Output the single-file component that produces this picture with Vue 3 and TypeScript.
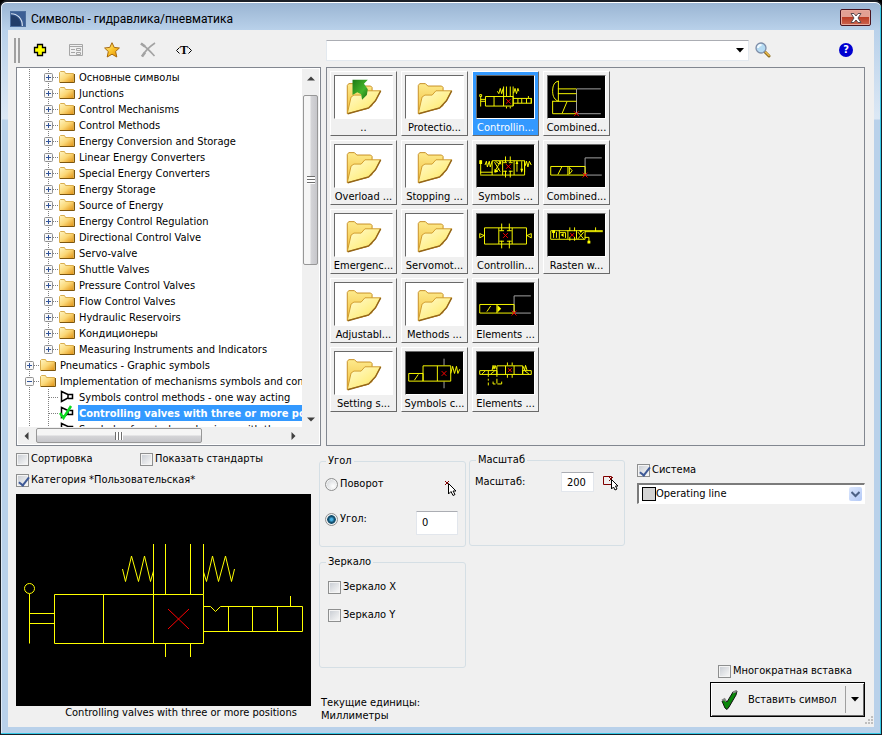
<script setup lang="ts">
import { ref } from 'vue'

type Row = { level: 0 | 1; text: string; kind: 'folder' | 'symbol' | 'checked'; open?: boolean; last?: boolean }
type Tile = { label: string; art: string }

const folders = [
  'Основные символы', 'Junctions', 'Control Mechanisms', 'Control Methods',
  'Energy Conversion and Storage', 'Linear Energy Converters', 'Special Energy Converters',
  'Energy Storage', 'Source of Energy', 'Energy Control Regulation', 'Directional Control Valve',
  'Servo-valve', 'Shuttle Valves', 'Pressure Control Valves', 'Flow Control Valves',
  'Hydraulic Reservoirs', 'Кондиционеры', 'Measuring Instruments and Indicators',
]

const rows: Row[] = [
  ...folders.map((text, i): Row => ({ level: 1, text, kind: 'folder', last: i === folders.length - 1 })),
  { level: 0, text: 'Pneumatics - Graphic symbols', kind: 'folder' },
  { level: 0, text: 'Implementation of mechanisms symbols and controls', kind: 'folder', open: true },
  { level: 1, text: 'Symbols control methods - one way acting', kind: 'symbol' },
  { level: 1, text: 'Controlling valves with three or more positions', kind: 'checked' },
  { level: 1, text: 'Symbols of control mechanisms with three positions', kind: 'symbol' },
]
const selectedRow = ref('Controlling valves with three or more positions')

const tiles: Tile[] = [
  { label: '..', art: 'up' },
  { label: 'Overload ...', art: 'folder' },
  { label: 'Emergenc...', art: 'folder' },
  { label: 'Adjustabl...', art: 'folder' },
  { label: 'Setting s...', art: 'folder' },
  { label: 'Protectio...', art: 'folder' },
  { label: 'Stopping ...', art: 'folder' },
  { label: 'Servomot...', art: 'folder' },
  { label: 'Methods ...', art: 'folder' },
  { label: 'Symbols c...', art: 'spring' },
  { label: 'Controllin...', art: 'control' },
  { label: 'Symbols ...', art: 'symbols' },
  { label: 'Controllin...', art: 'pilot' },
  { label: 'Elements ...', art: 'solenoid' },
  { label: 'Elements ...', art: 'elements' },
  { label: 'Combined...', art: 'manual' },
  { label: 'Combined...', art: 'combined' },
  { label: 'Rasten w...', art: 'rasten' },
]
const selectedTile = ref(10)

// Line work of each symbol: yellow body, gray leads, red insertion mark
const drawings: Record<string, { y: string; g?: string; r: string; f?: string }> = {
  spring: {
    y: 'M2.5 22.5H17.5V30.5H2.5ZM8.5 29.5L12.5 23.5M17.5 14.5H46.5V30.5H17.5ZM32.5 14.5V30.5M46.5 22.5L48.5 15L50.5 22.5L52.5 15L54 22.5L56 18',
    g: 'M39.5 7V14M39.5 31V38', r: 'M37 20L42 25M42 20L37 25',
  },
  control: {
    y: 'M8.5 21.5H37.5V31.5H8.5ZM17.5 21.5V31.5M27.5 11V31.5M30.5 11V21M34.5 11V21M37.5 11V31.5M37.5 23.5H56.5V28.5H37.5M56.5 23V29M42.5 23.5V28.5M46.5 23.5V28.5M51.5 23.5V28.5M53.5 21V23M3.5 22V32M3.5 24.5H8.5M3.5 26.5H8.5M2.5 19.5H4.5V21.5H2.5ZM30.5 32V34M34.5 32V34M21 16L22.5 18.5L24 13L25.5 18.5L27 13M38 18L39.5 13L41 18.5L42.5 13L43.5 16',
    r: 'M30 24L35 29M35 24L30 29',
  },
  symbols: {
    y: 'M3.5 16V31M3 28.5H16M3 31.5H49.5M8 21L9.5 17L10.5 23L12.5 17L13.5 23L15.5 17M15.5 16.5H49.5V28.5M15.5 16.5V31.5M26.5 16.5V31.5M38.5 16.5V31.5M49.5 16.5V31.5M18 18L24 28M24 18L18 28M19 17L23 20M19 28L23 25M29.5 12V18M34.5 12V18M27 18.5H31M33 18.5H37M29.5 27V34M34.5 27V34M27 27.5H31M33 27.5H37M41.5 17V28M46.5 17V28M50 22L51.5 17L53 23L54.5 17L56.5 21',
    f: 'M2 16H5V20H2ZM40 20L41.5 16.5L43 20ZM45 25H48L46.5 29ZM22 17H25V21ZM18 29V25L22 28Z', r: 'M30 20L35 25M35 20L30 25',
  },
  pilot: {
    y: 'M7.5 14.5H51.5V31.5H7.5ZM22.5 14.5V31.5M36.5 14.5V31.5M25.5 10V17.5M33.5 10V17.5M23 17.5H28M31 17.5H36M25.5 28V36M33.5 28V36M23 28.5H28M31 28.5H36M2.5 20.5L7 22.5L2.5 25ZM56.5 20.5L52 22.5L56.5 25Z',
    r: 'M27 20L32 25M32 20L27 25',
  },
  solenoid: {
    y: 'M2.5 22.5H38.5V31.5H2.5ZM20.5 22.5V31.5M10 30L14 24', f: 'M21 23L25 27L21 31Z',
    g: 'M56 13.5H38.5V31.5H56', r: 'M36 29L41 34M41 29L36 34',
  },
  elements: {
    y: 'M20.5 14.5H47.5V23.5H20.5ZM29.5 14.5V23.5M38.5 14.5V23.5M2.5 19.5H20.5V23.5H2.5ZM11.5 19.5V23.5M5 23L8 20M14 23L18 20M47.5 19.5H56.5V23.5H47.5ZM50 20L54 23M15.5 19L16.5 14L17.5 18L18.5 14L20 18M48 15L49.5 19L50.5 14L52 19M31.5 11V14M36.5 11V14M31.5 24V27M36.5 24V27M11.5 24V26M11.5 28V30M11.5 32V35M20.5 24V26M20.5 28V33M16.5 31V33.5H19M21 33.5H25.5V31',
    r: 'M32 17L36 21M36 17L32 21',
  },
  manual: {
    y: 'M10.5 5V26.5M10.5 5.5C7 6 4.5 9 4.5 16C4.5 22 7 25 10.5 26.5M10 13.5H29.5M10 18.5H29.5M4.5 26.5H29.5M4.5 26V39.5H29.5M14.5 39L19.5 27',
    g: 'M29.5 13.5V39.5M30 13.5H55M30 39.5H55', r: 'M27 37L32 42M32 37L27 42',
  },
  combined: {
    y: 'M2.5 22.5H38.5V31.5H2.5ZM20.5 22.5V31.5M10 31L14 23M22 23.5L25 27L22 30.5Z',
    g: 'M56 13.5H38.5V31.5H56', r: 'M36 29L41 34M41 29L36 34',
  },
  rasten: {
    y: 'M2.5 17.5H38.5V26.5H2.5ZM11.5 17V26M20.5 17V26M29.5 17V26M5.5 19V25M8.5 19V25M12 19.5H18V25M22.5 14V18M27.5 14V18M22.5 24V28M27.5 24V28M31 19L37 26M37 19L31 26M38.5 18.5H57M38.5 17.5H57M49.5 14V18M38 24.5H42.5V30', f: 'M41 28H44V31H41ZM13 22L16 20V24ZM32 17H36L34 20ZM4 17H7V20H4Z',
    r: 'M23 20L27 24M27 20L23 24',
  },
}

const sorting = ref(false)
const standards = ref(false)
const category = ref(true)
const angleMode = ref('angle')
const angle = ref('0')
const scale = ref('200')
const mirrorX = ref(false)
const mirrorY = ref(false)
const system = ref(true)
const line = ref('Operating line')
const multiple = ref(false)
const query = ref('')
</script>

<template>
  <main class="window">
    <header class="titlebar">
      <svg class="logo" width="16" height="16" viewBox="0 0 16 16">
        <rect width="16" height="16" fill="#2d4f84" />
        <path d="M0 0H16V16H14C14 7 8 2 0 2Z" fill="#3c5f95" />
        <path d="M0 2C7 2 13 7 13 16" fill="none" stroke="#d5e1f2" stroke-width="1.4" />
        <path d="M0 4C6 4 11 8 11 16H0Z" fill="#223d69" />
      </svg>
      <h1>Символы - гидравлика/пневматика</h1>
      <button class="close" type="button" aria-label="Закрыть">
        <svg width="14" height="12" viewBox="0 0 14 12">
          <path d="M2 1.5H5L7 4L9 1.5H12L9 6L12 10.5H9L7 8L5 10.5H2L5 6Z" fill="#fff" stroke="#5a4a4e" />
        </svg>
      </button>
    </header>

    <div class="client">
      <div class="toolbar">
        <span class="grip"></span>
        <div class="tools">
          <button type="button" aria-label="Добавить">
            <svg width="16" height="16" viewBox="0 0 16 16"><path d="M5.5 2.5H10.5V5.5H13.5V10.5H10.5V13.5H5.5V10.5H2.5V5.5H5.5Z" fill="#ff0" stroke="#000" stroke-width="1.3" /></svg>
          </button>
          <button type="button" aria-label="Свойства" disabled>
            <svg width="16" height="16" viewBox="0 0 16 16"><path d="M1.5 2.5H14.5V13.5H1.5ZM1 4.5H15M3 7.5H7M3 10.5H7M8.5 6.5H12.5V8.5H8.5ZM8.5 10.5H12.5V12.5H8.5Z" fill="none" stroke="#a6a6a6" /></svg>
          </button>
          <button type="button" aria-label="Избранное">
            <svg width="16" height="16" viewBox="0 0 16 16">
              <defs><linearGradient id="star" x1="0" y1="0" x2="1" y2="1"><stop offset="0" stop-color="#fff3a0" /><stop offset=".5" stop-color="#fbc52c" /><stop offset="1" stop-color="#e08a00" /></linearGradient></defs>
              <path d="M8 .7L10.2 5.4L15.4 6L11.6 9.5L12.8 15L8 12.2L3.2 15L4.3 9.5L.6 6L5.8 5.4Z" fill="url(#star)" stroke="#a8690c" stroke-linejoin="round" />
            </svg>
          </button>
          <button type="button" aria-label="Удалить" disabled>
            <svg width="16" height="16" viewBox="0 0 16 16"><path d="M1 1.5C6 5 10 9 14.5 14M15 1C9 5 5 9 2 14.5" fill="none" stroke="#a3a3a3" stroke-width="1.6" /><path d="M1 1.5L5 4.5M2 14.5L5 10.5" stroke="#a3a3a3" stroke-width="2.6" /></svg>
          </button>
          <button type="button" class="text-tool" aria-label="Текст">
            <svg width="4" height="7" viewBox="0 0 4 7"><path d="M3.5 .5L.5 3.5L3.5 6.5" fill="none" stroke="#000" /></svg><b>T</b><svg width="4" height="7" viewBox="0 0 4 7"><path d="M.5 .5L3.5 3.5L.5 6.5" fill="none" stroke="#000" /></svg>
          </button>
        </div>
        <div class="combo">
          <input v-model="query" type="text" aria-label="Поиск" />
          <button type="button" aria-label="Список"><svg width="8" height="5" viewBox="0 0 8 5"><path d="M0 0H8L4 4.5Z" /></svg></button>
        </div>
        <button class="icon-button" type="button" aria-label="Найти">
          <svg width="16" height="16" viewBox="0 0 16 16">
            <path d="M10 10L14 14" stroke="#8b6a1c" stroke-width="3" stroke-linecap="round" />
            <path d="M10.5 10L14 13.5" stroke="#e8b84a" stroke-width="1.6" stroke-linecap="round" />
            <circle cx="6" cy="6" r="5" fill="#b5dbf3" stroke="#7f8ea8" stroke-width="1.3" />
            <path d="M3 6C3 4 4.5 3 6.5 3" fill="none" stroke="#f1faff" stroke-width="2" />
          </svg>
        </button>
        <button class="icon-button help" type="button" aria-label="Справка">?</button>
      </div>

      <div class="browser">
        <section class="tree">
          <ul class="rows">
            <li v-for="row in rows" :key="row.text" class="row">
              <span v-if="row.level === 1" class="cell"></span>
              <span :class="['cell', 'branch', { half: row.last }]">
                <button v-if="row.kind === 'folder'" class="expander" type="button" :aria-label="row.text">
                  <svg width="9" height="9" viewBox="0 0 9 9"><rect x=".5" y=".5" width="8" height="8" rx="1" fill="#f8f8f8" stroke="#919191" /><path :d="row.open ? 'M2 4.5H7' : 'M2 4.5H7M4.5 2V7'" stroke="#31549a" /></svg>
                </button>
              </span>
              <svg v-if="row.kind === 'folder'" class="glyph" width="16" height="16" viewBox="0 0 16 16">
                <defs><linearGradient id="fold" x1="0" y1="0" x2="1" y2="1"><stop offset="0" stop-color="#fff6c4" /><stop offset=".5" stop-color="#fbd877" /><stop offset="1" stop-color="#e08f10" /></linearGradient></defs>
                <path d="M.5 3.5L1.5 2.5H5.5L6.5 4.5H14.5V13.5H.5Z" fill="url(#fold)" stroke="#d9ae4f" />
                <path d="M1 13.5H15.5V5" fill="none" stroke="#7d560e" />
              </svg>
              <svg v-else class="glyph" width="16" height="16" viewBox="0 0 16 16">
                <path d="M2.5 2.5V12.5L9 9V5.5ZM9 5.5H13.5V9.5H9" fill="#fff" stroke="#000" stroke-width="1.5" />
                <path v-if="row.kind === 'checked'" d="M1 8L4.5 13L12 1" fill="none" stroke="#0bdc1f" stroke-width="2.5" />
              </svg>
              <button type="button" :class="['label', { selected: row.text === selectedRow }]" @click="selectedRow = row.text">{{ row.text }}</button>
            </li>
          </ul>
          <div class="vbar">
            <svg width="8" height="5" viewBox="0 0 8 5"><path d="M0 4.5L4 .5L8 4.5Z" /></svg>
            <span class="thumb"><i></i></span>
            <svg class="end" width="8" height="5" viewBox="0 0 8 5"><path d="M0 .5L4 4.5L8 .5Z" /></svg>
          </div>
          <div class="hbar">
            <svg width="5" height="8" viewBox="0 0 5 8"><path d="M4.5 0L.5 4L4.5 8Z" /></svg>
            <span class="thumb"><i></i></span>
            <svg class="end" width="5" height="8" viewBox="0 0 5 8"><path d="M.5 0L4.5 4L.5 8Z" /></svg>
          </div>
          <span class="corner"></span>
        </section>

        <section class="gallery">
          <button v-for="(tile, i) in tiles" :key="i" type="button" :class="['tile', { selected: i === selectedTile }]" @click="selectedTile = i">
            <svg v-if="!drawings[tile.art]" class="art paper" width="59" height="44" viewBox="0 0 59 44">
              <defs>
                <linearGradient id="back" x1="0" y1="0" x2="0" y2="1"><stop offset="0" stop-color="#fdea8c" /><stop offset="1" stop-color="#f2bd3a" /></linearGradient>
                <linearGradient id="front" x1="0" y1="0" x2="1" y2="1"><stop offset="0" stop-color="#fffbd2" /><stop offset=".6" stop-color="#ffef88" /><stop offset="1" stop-color="#f3c64e" /></linearGradient>
                <linearGradient id="green" x1="0" y1="0" x2="1" y2="1"><stop offset="0" stop-color="#1c7a14" /><stop offset=".6" stop-color="#44b42c" /><stop offset="1" stop-color="#186c10" /></linearGradient>
              </defs>
              <path d="M12.5 39V10L14 8H20L22.5 10.5H37L38.5 12V31L34 34Z" fill="url(#back)" stroke="#c58c20" />
              <path d="M12.5 39.5L16.5 22L19.5 20H27L31 15.5H47.5L42 26L35 33.5Z" fill="url(#front)" stroke="#cf9a2c" />
              <path d="M47.5 15.5L42 26L35 33.5L13 39.5" fill="none" stroke="#94661a" stroke-width="1.5" />
              <path v-if="tile.art === 'up'" d="M18 4H34L30 8L34 14L33 20L28 25L27 19L23 17L18 20Z" fill="url(#green)" />
            </svg>
            <svg v-else class="art" width="59" height="44" viewBox="0 0 59 44">
              <path v-if="drawings[tile.art].g" :d="drawings[tile.art].g" fill="none" stroke="#a8a8a8" />
              <path :d="drawings[tile.art].y" fill="none" stroke="#ff0" />
              <path v-if="drawings[tile.art].f" :d="drawings[tile.art].f" fill="#ff0" />
              <path :d="drawings[tile.art].r" fill="none" stroke="#f00" />
            </svg>
            <span>{{ tile.label }}</span>
          </button>
        </section>
      </div>

      <div class="settings">
        <section class="preview">
          <div class="checks">
            <label class="check"><input v-model="sorting" type="checkbox" />Сортировка</label>
            <label class="check"><input v-model="standards" type="checkbox" />Показать стандарты</label>
          </div>
          <label class="check"><input v-model="category" type="checkbox" />Категория *Пользовательская*</label>
          <figure>
            <svg width="295" height="212" viewBox="0 0 295 212">
              <rect width="295" height="212" />
              <g fill="none" stroke="#ff0">
                <circle cx="13.5" cy="94.5" r="5" />
                <path d="M13.5 100V149.5M13.5 119.5H38.5M13.5 129.5H38.5M38.5 100.5H187.5V149.5H38.5ZM87.5 100.5V149.5M137.5 50V149.5M149.5 50V100.5M174.5 50V100.5M187.5 50V100.5M149.5 149.5V163M174.5 149.5V163" />
                <path d="M187.5 112.5H194.5L199.5 117.5L204.5 112.5H286.5V137.5H187.5M212.5 112.5V137.5M236.5 112.5V137.5M261.5 112.5V137.5M274.5 102V112.5" />
                <path d="M106.5 75L109.5 87.5L115.5 62L122.5 87.5L128.5 62L134.5 87.5L137.5 77M187.5 78L190.5 87.5L196.5 62L202.5 87.5L209.5 62L215.5 87.5L218.5 75" />
              </g>
              <path d="M152 115L173 135M173 115L152 135" stroke="#f00" />
            </svg>
            <figcaption>Controlling valves with three or more positions</figcaption>
          </figure>
        </section>

        <section class="orientation">
          <fieldset class="angle">
            <legend>Угол</legend>
            <div class="line">
              <label class="check"><input v-model="angleMode" type="radio" name="angle" value="rotate" />Поворот</label>
              <button class="pick" type="button" aria-label="Указать угол">
                <svg width="14" height="17" viewBox="0 0 14 17"><path d="M1 1L5 5M5 1L1 5" stroke="#800000" /><path d="M4.500 3.500V14L7 11.500L9 15.500L11 14.500L9 11H12Z" fill="#fff" stroke="#000" /></svg>
              </button>
            </div>
            <div class="line">
              <label class="check"><input v-model="angleMode" type="radio" name="angle" value="angle" />Угол:</label>
              <input v-model="angle" class="field" type="text" aria-label="Угол" />
            </div>
          </fieldset>
          <fieldset class="mirror">
            <legend>Зеркало</legend>
            <label class="check"><input v-model="mirrorX" type="checkbox" />Зеркало X</label>
            <label class="check"><input v-model="mirrorY" type="checkbox" />Зеркало Y</label>
          </fieldset>
          <p class="units">Текущие единицы:<br />Миллиметры</p>
        </section>

        <section class="scaling">
          <fieldset>
            <legend>Масштаб</legend>
            <div class="line">
              <label for="scale">Масштаб:</label>
              <input id="scale" v-model="scale" class="field" type="text" />
              <button class="pick" type="button" aria-label="Указать масштаб">
                <svg width="17" height="17" viewBox="0 0 17 17"><path d="M1.500 2.500H9.500V10.500H1.500ZM7 3L11 7M11 3L7 7" fill="none" stroke="#800000" /><path d="M9.500 5.500V15L11.500 13L13 16L15 15L13.500 12H16Z" fill="#fff" stroke="#000" /></svg>
              </button>
            </div>
          </fieldset>
        </section>

        <section class="actions">
          <label class="check"><input v-model="system" type="checkbox" />Система</label>
          <div class="select">
            <i class="swatch"></i>
            <select v-model="line" aria-label="Тип линии"><option>Operating line</option></select>
            <span class="drop"><svg width="9" height="7" viewBox="0 0 9 7"><path d="M.5 1L4.500 5L8.500 1" fill="none" stroke="#4d6185" stroke-width="2" /></svg></span>
          </div>
          <div class="insert">
            <label class="check"><input v-model="multiple" type="checkbox" />Многократная вставка</label>
            <div class="split">
              <button class="main" type="button">
                <svg width="17" height="20" viewBox="0 0 17 20"><path d="M1 11L3 9L6 12L12 2L16 1L15 5L8 17L6 19.500L4 18Z" fill="#0a860a" stroke="#111" /><path d="M1 10.500L3.500 9L5 11.500M12 2.500L15.500 1" fill="none" stroke="#888" stroke-width="2" /></svg>
                Вставить символ
              </button>
              <button class="more" type="button" aria-label="Варианты вставки"><svg width="8" height="5" viewBox="0 0 8 5"><path d="M0 0H8L4 4.500Z" /></svg></button>
            </div>
          </div>
        </section>
      </div>
      <svg class="resize" width="9" height="9" viewBox="0 0 9 9"><path d="M7 0H9V2H7ZM7 3H9V5H7ZM7 6H9V8H7ZM4 3H6V5H4ZM4 6H6V8H4ZM1 6H3V8H1Z" fill="#bfbfbf" /></svg>
    </div>
  </main>
</template>

<style>
body { background: #000; }
</style>

<style scoped>
* { box-sizing: border-box; }
.window {
  display: flex;
  flex-direction: column;
  min-height: 100vh;
  padding: 0 7px 7px 6px;
  border: 1px solid #1b1f26;
  border-top-width: 2px;
  border-radius: 7px 7px 0 0;
  box-shadow: inset 0 1px #fff, inset -1px -1px #35c8e6, inset 1px 0 #dfeaf6;
  background: linear-gradient(#99b4d2, #b9d1ea 28px, #dce8f5 117px, #b9d1ea 118px);
  color: #000;
  font: 11px/14px Tahoma, "DejaVu Sans Condensed", "DejaVu Sans", sans-serif;
}
button, input, select { font: inherit; color: inherit; }
button { padding: 0; border: 0; background: none; }
svg { display: block; flex: none; }
.titlebar { display: flex; align-items: center; gap: 5px; height: 28px; padding: 6px 3px 0; }
.titlebar h1 { flex: 1; margin: 0; font: 12px/16px "Segoe UI", Roboto, sans-serif; }
.logo { border: 1px solid #4d6f9f; }
.close {
  display: grid; place-items: center; width: 31px; height: 17px; margin-bottom: 3px;
  border: 1px solid #4a1520; border-radius: 2px;
  box-shadow: inset 0 0 0 1px #e7a99c;
  background: linear-gradient(#e2a093 0 45%, #bb3e26 50%, #cc6450);
}
.client { position: relative; display: flex; flex: 1; flex-direction: column; margin-left: 1px; padding: 0 9px 0 8px; background: #f0f0f0; }
.toolbar { display: flex; align-items: center; height: 37px; padding-top: 3px; }
.grip { flex: none; width: 6px; height: 25px; margin-left: -2px; border: solid #a0a0a0; border-width: 0 2px; }
.tools { display: flex; flex: none; gap: 20px; width: 306px; padding-left: 12px; }
.tools button { display: flex; align-items: center; justify-content: center; width: 16px; height: 16px; }
.text-tool b { font: bold 12px/16px "Liberation Serif", serif; }
.combo { display: flex; flex: 1; align-items: center; height: 21px; margin-right: 6px; border: 1px solid #e3e9ef; border-top-color: #abadb3; background: #fff; }
.combo input { flex: 1; min-width: 0; padding: 0 4px; border: 0; outline: 0; background: none; }
.combo button { display: grid; place-items: center; width: 16px; height: 18px; }
.icon-button { flex: none; width: 16px; height: 16px; }
.help { width: 14px; height: 14px; margin: 0 12px 0 68px; border-radius: 50%; background: #0000d0; color: #fff; font-weight: bold; line-height: 14px; }

.browser { display: flex; flex: 1; gap: 5px; min-height: 200px; }
.tree { display: grid; flex: none; grid-template: minmax(0, 1fr) 17px / minmax(0, 1fr) 17px; width: 305px; padding: 1px; border: 1px solid #828790; background: #fff; }
.rows { height: 0; min-height: 100%; margin: 0; padding: 0 0 0 2px; overflow: hidden; list-style: none; }
.row { display: flex; align-items: center; height: 16px; }
.cell { position: relative; flex: none; width: 19px; height: 16px; background: repeating-linear-gradient(#808080 0 1px, transparent 1px 2px) 9px 0 / 1px 16px no-repeat; }
.cell.half { background-size: 1px 8px; }
.branch::after { content: ""; position: absolute; top: 8px; left: 10px; width: 10px; height: 1px; background: repeating-linear-gradient(90deg, #808080 0 1px, transparent 1px 2px); }
.expander { position: absolute; top: 4px; left: 5px; z-index: 1; }
.glyph { margin-left: 1px; }
.label { flex: none; height: 16px; margin-left: 3px; padding: 2px 1px 0; white-space: nowrap; }
.label.selected { background: #3399ff; color: #fff; font-weight: bold; }
.vbar, .hbar, .corner { display: flex; align-items: center; background: #f0f0f0; fill: #404040; }
.vbar { flex-direction: column; gap: 14px; padding: 7px 0 5px; }
.hbar { gap: 7px; padding: 0 6px; }
.end { margin: auto 0 0; }
.hbar .end { margin: 0 0 0 auto; }
.thumb { display: grid; flex: none; place-items: center; border: 1px solid #979797; border-radius: 2px; }
.vbar .thumb { width: 15px; height: 49%; background: linear-gradient(90deg, #f5f5f5 45%, #d4d4d7 55%, #c6c6ca); }
.hbar .thumb { width: 166px; height: 15px; background: linear-gradient(#f5f5f5 45%, #d4d4d7 55%, #c6c6ca); }
.vbar i { width: 8px; height: 8px; background: repeating-linear-gradient(#6d6d6d 0 1px, #fff 1px 3px); }
.hbar i { width: 8px; height: 8px; background: repeating-linear-gradient(90deg, #6d6d6d 0 1px, #fff 1px 3px); }

.gallery {
  display: grid; flex: 1; grid-auto-flow: column; grid-template-rows: repeat(5, 65px); grid-auto-columns: 67px;
  gap: 4px; align-content: start; min-width: 0; padding: 3px; overflow: hidden; border: 1px solid #828790;
}
.tile { display: flex; flex-direction: column; align-items: center; height: 65px; padding-top: 3px; border: 1px solid #696969; border-top-color: #fff; border-left-color: #fff; white-space: nowrap; }
.tile.selected { background: #3399ff; color: #fff; }
.tile span { line-height: 17px; }
.art { border: 1px solid #fff; border-top-color: #696969; border-left-color: #696969; background: #000; }
.art.paper { background: #fff; }

.settings { display: flex; min-height: 281px; }
.preview { flex: none; width: 295px; padding-top: 5px; }
.checks { display: grid; grid-template-columns: 124px 1fr; margin-bottom: 5px; }
.check { display: flex; align-items: center; gap: 2px; height: 16px; white-space: nowrap; }
.check input { flex: none; width: 13px; height: 13px; margin: 0; appearance: none; border: 1px solid #8e8f8f; background: linear-gradient(135deg, #cbcfd5, #f6f6f6) center / 9px 9px no-repeat #f4f4f4; }
.check input[type="checkbox"]:checked { position: relative; }
.check input[type="checkbox"]:checked::after { content: ""; position: absolute; top: 0; left: 4px; width: 4px; height: 9px; border: solid #3f5a97; border-width: 0 2px 2px 0; transform: rotate(38deg); }
.check input[type="radio"] { border-radius: 50%; background: radial-gradient(circle at 65% 65%, #fff, #c8ccd0); box-shadow: inset 0 0 0 1px #f4f4f4; }
.check input[type="radio"]:checked { background: radial-gradient(circle, #49b4e8 0 1px, #14506f 3px, #14506f 4px, #eee 5px); }
figure { margin: 6px 0 0; }
figcaption { padding-left: 35px; text-align: center; }
.orientation { flex: none; width: 147px; margin-left: 8px; padding-top: 8px; }
.scaling { flex: none; width: 156px; margin-left: 3px; padding-top: 7px; }
fieldset { min-width: 0; margin: 0; padding: 0 7px 0 5px; border: 1px solid #d5dfe5; border-radius: 3px; }
legend { margin-left: 1px; padding: 0 2px; }
.angle { height: 93px; margin-bottom: 8px; }
.line { display: flex; justify-content: space-between; }
.angle .line { padding-top: 8px; }
.angle .pick { padding-top: 4px; }
.angle .line + .line { padding-top: 14px; }
.mirror { display: flex; flex-direction: column; gap: 12px; height: 113px; padding-left: 8px; }
.mirror legend { margin-left: -2px; }
.mirror legend + .check { margin-top: 10px; }
.field { width: 42px; height: 24px; padding: 0 5px 2px; border: 1px solid #e2e6ec; border-top-color: #abadb3; border-radius: 1px; outline: 0; background: #fff; }
.units { margin: 28px 0 0 2px; line-height: 13px; }
.scaling fieldset { height: 93px; padding-right: 5px; }
.scaling .line { align-items: center; gap: 8px; padding-top: 5px; }
.scaling .line label { flex: 1; }
.scaling .field { width: 33px; height: 20px; padding-bottom: 0; }
.actions { display: flex; flex: 1; flex-direction: column; margin-left: 12px; padding: 16px 0 10px; }
.select { display: flex; align-items: center; height: 21px; margin-top: 5px; padding: 0 2px 0 3px; border: 1px solid #fff; border-top: 2px solid #7b7b7b; border-left: 2px solid #7b7b7b; background: #fff; }
.swatch { width: 14px; height: 14px; border: 1px solid #000; background: #d3d3d3; }
.select select { flex: 1; min-width: 0; padding: 0; appearance: none; border: 0; outline: 0; background: none; }
.drop { display: grid; place-items: center; width: 13px; height: 14px; border-radius: 2px; background: linear-gradient(135deg, #dce7fd, #b3c9f6); pointer-events: none; }
.insert { display: flex; flex-direction: column; align-items: flex-end; gap: 3px; margin-top: auto; }
.insert .check { width: 147px; }
.split { display: flex; align-items: center; width: 155px; height: 35px; border: 1px solid #000; box-shadow: inset 1px 1px #fff, inset -1px -1px #696969; }
.main { display: flex; flex: 1; align-items: center; gap: 10px; padding-left: 10px; white-space: nowrap; }
.more { display: grid; place-items: center; width: 19px; height: 27px; border-left: 1px solid #a0a0a0; }
.resize { position: absolute; right: 1px; bottom: 2px; }
</style>
